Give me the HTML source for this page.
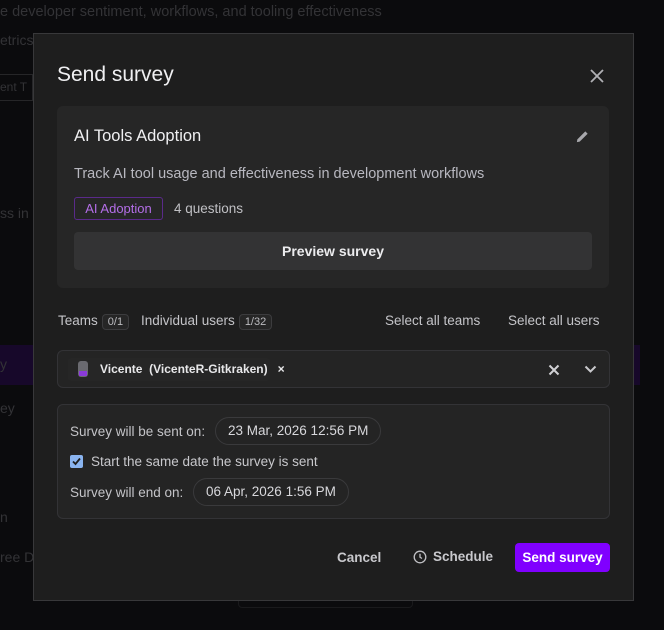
<!DOCTYPE html>
<html><head><style>
*{box-sizing:border-box;margin:0;padding:0}
body{width:664px;height:630px;background:#0b0b0d;font-family:"Liberation Sans",sans-serif;position:relative;overflow:hidden;color:#e8e8ea}
.bg{position:absolute;color:#333336;font-size:14px;white-space:nowrap}
.a{position:absolute}
.modal{position:absolute;left:33px;top:33px;width:601px;height:568px;background:#1e1e1e;border:1px solid #38383a}
.card{position:absolute;left:23px;top:72px;width:552px;height:182px;background:#262626;border-radius:6px}
.box{position:absolute;border:1px solid #333336;border-radius:6px;background:#242424}
.pill{position:absolute;border:1px solid #3a3a3c;border-radius:16px;height:28px;line-height:26px;padding:0 12px;font-size:13.5px;color:#d8d8dc}
.cnt{display:inline-block;border:1px solid #3c3c3e;border-radius:4px;font-size:11px;padding:1px 5px;margin-left:4px;color:#bcbcc0;background:#262626}
</style></head><body>
<div class="bg" style="left:0;top:4px;font-size:14.5px">e developer sentiment, workflows, and tooling effectiveness</div>
<div class="bg" style="left:0;top:32px">etrics</div>
<div class="a" style="left:0;top:74px;width:33px;height:27px;border:1px solid #262628;border-left:none"></div>
<div class="bg" style="left:0;top:80px;font-size:12px">ent T</div>
<div class="bg" style="left:0;top:205px">ss in</div>
<div class="a" style="left:0;top:345px;width:40px;height:40px;background:#17082a"></div>
<div class="a" style="left:628px;top:345px;width:12px;height:40px;background:#17082a"></div>
<div class="bg" style="left:0;top:356px">y</div>
<div class="bg" style="left:0;top:400px">ey</div>
<div class="bg" style="left:0;top:509px">n</div>
<div class="bg" style="left:0;top:549px">ree D</div>
<div class="a" style="left:238px;top:596px;width:175px;height:12px;border:1px solid #1a1a1c;border-radius:4px"></div>

<div class="modal">
<div class="a" style="left:23px;top:29px;font-size:21px;color:#f0f0f2">Send survey</div>
<svg class="a" style="left:555px;top:34px" width="16" height="16" viewBox="0 0 16 16"><path d="M2 2L14 14M14 2L2 14" stroke="#b0b0b4" stroke-width="1.8"/></svg>
<div class="card">
<div class="a" style="left:17px;top:21px;font-size:16.5px;color:#f0f0f2">AI Tools Adoption</div>
<svg class="a" style="left:518px;top:23px" width="15" height="15" viewBox="0 0 16 16"><path d="M2 14L2.5 11L11 2.5L13.5 5L5 13.5Z" fill="#a8a8ac"/></svg>
<div class="a" style="left:17px;top:60px;font-size:14.5px;color:#b8b8c0">Track AI tool usage and effectiveness in development workflows</div>
<div class="a" style="left:17px;top:91px;height:23px;width:89px;border:1px solid #5a2a8a;border-radius:3px;font-size:13px;color:#b46ee8;text-align:center;line-height:21px">AI Adoption</div>
<div class="a" style="left:117px;top:95px;font-size:13.5px;color:#c0c0c4">4 questions</div>
<div class="a" style="left:17px;top:126px;width:518px;height:38px;background:#333334;border-radius:4px;text-align:center;line-height:38px;font-size:14px;font-weight:bold;color:#ececee">Preview survey</div>
</div>
<div class="a" style="left:24px;top:279px;font-size:13.5px;color:#c4c4c8">Teams<span class="cnt">0/1</span></div>
<div class="a" style="left:107px;top:279px;font-size:13.5px;color:#c4c4c8">Individual users<span class="cnt">1/32</span></div>
<div class="a" style="left:351px;top:279px;font-size:13.5px;color:#c4c4c8">Select all teams</div>
<div class="a" style="left:474px;top:279px;font-size:13.5px;color:#c4c4c8">Select all users</div>
<div class="box" style="left:23px;top:316px;width:553px;height:38px">
<div class="a" style="left:10px;top:7px;width:202px;height:23px;background:#262626;border-radius:3px"></div>
<div class="a" style="left:20px;top:10px;width:10px;height:16px;background:#6a6a70;border-radius:3px"></div>
<div class="a" style="left:21px;top:20px;width:8px;height:5px;background:#8a3ad8"></div>
<div class="a" style="left:42px;top:11px;font-size:12px;font-weight:bold;color:#e8e8ea">Vicente&nbsp;&nbsp;(VicenteR-Gitkraken)&nbsp;&nbsp;&nbsp;×</div>
<svg class="a" style="left:490px;top:13px" width="12" height="12" viewBox="0 0 12 12"><path d="M1.5 1.5L10.5 10.5M10.5 1.5L1.5 10.5" stroke="#d0d0d4" stroke-width="2"/></svg>
<svg class="a" style="left:526px;top:13px" width="13" height="10" viewBox="0 0 13 10"><path d="M1.5 2.5L6.5 7.5L11.5 2.5" stroke="#c8c8cc" stroke-width="2" fill="none"/></svg>
</div>
<div class="box" style="left:23px;top:370px;width:553px;height:115px">
<div class="a" style="left:12px;top:19px;font-size:13.5px;color:#c4c4c8">Survey will be sent on:</div>
<div class="pill" style="left:157px;top:12px">23 Mar, 2026 12:56 PM</div>
<div class="a" style="left:12px;top:50px;width:13px;height:13px;background:#8ab4f0;border-radius:2px"></div>
<svg class="a" style="left:13px;top:51px" width="11" height="11" viewBox="0 0 11 11"><path d="M2 5.5L4.5 8L9 2.5" stroke="#1e1e1e" stroke-width="1.8" fill="none"/></svg>
<div class="a" style="left:33px;top:49px;font-size:13.5px;color:#c8c8cc">Start the same date the survey is sent</div>
<div class="a" style="left:12px;top:80px;font-size:13.5px;color:#c4c4c8">Survey will end on:</div>
<div class="pill" style="left:135px;top:73px">06 Apr, 2026 1:56 PM</div>
</div>
<div class="a" style="left:303px;top:516px;font-size:13.5px;color:#c8c8cc;font-weight:bold">Cancel</div>
<svg class="a" style="left:379px;top:516px" width="14" height="14" viewBox="0 0 14 14"><circle cx="7" cy="7" r="5.8" stroke="#c0c0c4" stroke-width="1.3" fill="none"/><path d="M7 3.8V7.2L9 8.5" stroke="#c0c0c4" stroke-width="1.3" fill="none"/></svg>
<div class="a" style="left:399px;top:515px;font-size:13.5px;color:#c8c8cc;font-weight:bold">Schedule</div>
<div class="a" style="left:481px;top:509px;width:95px;height:29px;background:#8000ff;border-radius:4px;text-align:center;line-height:29px;font-size:13.5px;font-weight:bold;color:#fff">Send survey</div>
</div>
</body></html>
